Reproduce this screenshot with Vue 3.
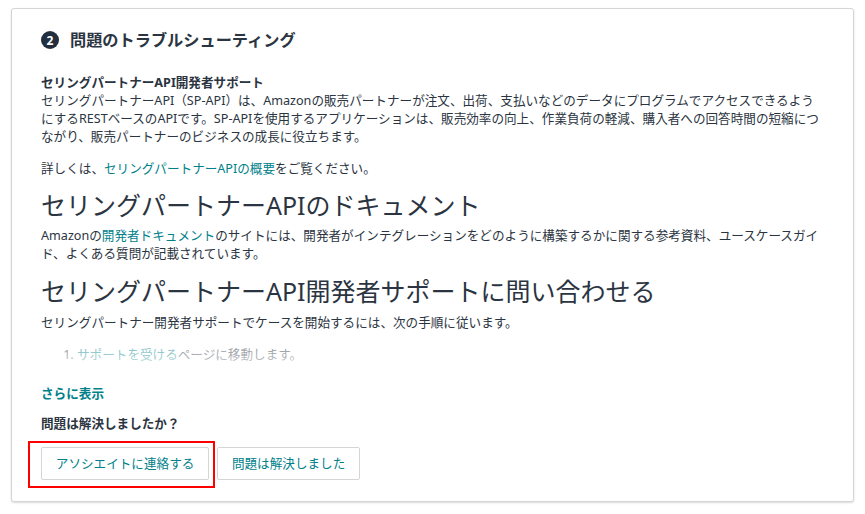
<script setup>
</script>

<template>
  <div class="page">
    <section class="card">
      <header class="head">
        <span class="step">2</span>
        <h2 class="title">問題のトラブルシューティング</h2>
      </header>
      <div class="body">
        <div class="content">
          <p class="para"><b>セリングパートナーAPI開発者サポート</b><br>セリングパートナーAPI（SP-API）は、Amazonの販売パートナーが注文、出荷、支払いなどのデータにプログラムでアクセスできるようにするRESTベースのAPIです。SP-APIを使用するアプリケーションは、販売効率の向上、作業負荷の軽減、購入者への回答時間の短縮につながり、販売パートナーのビジネスの成長に役立ちます。</p>
          <p class="para gap">詳しくは、<a class="link">セリングパートナーAPIの概要</a>をご覧ください。</p>
          <h1 class="big first">セリングパートナーAPIのドキュメント</h1>
          <p class="para">Amazonの<a class="link">開発者ドキュメント</a>のサイトには、開発者がインテグレーションをどのように構築するかに関する参考資料、ユースケースガイド、よくある質問が記載されています。</p>
          <h1 class="big second">セリングパートナーAPI開発者サポートに問い合わせる</h1>
          <p class="para">セリングパートナー開発者サポートでケースを開始するには、次の手順に従います。</p>
          <ol class="steps">
            <li><a class="link">サポートを受ける</a>ページに移動します。</li>
          </ol>
          <div class="fade"></div>
        </div>
        <a class="more">さらに表示</a>
        <p class="ask">問題は解決しましたか？</p>
        <div class="actions">
          <span class="marked"><button class="btn">アソシエイトに連絡する</button></span>
          <button class="btn">問題は解決しました</button>
        </div>
      </div>
    </section>
  </div>
</template>

<style>
html, body { margin: 0; background: #fff; }
</style>

<style scoped>
.page {
  width: 865px;
  height: 514px;
  box-sizing: border-box;
  padding: 8px 11px 0 11px;
  overflow: hidden;
  font-family: "Noto Sans", "Noto Sans CJK JP", sans-serif;
  color: #16191f;
}
.card {
  box-sizing: border-box;
  height: 494px;
  background: #fff;
  border: 1px solid #d5d5d5;
  border-radius: 3px;
  box-shadow: 0 1px 2px rgba(0, 0, 0, 0.15);
  padding: 19px 29px 0;
}
.head { display: flex; align-items: center; gap: 11px; height: 24px; }
.step {
  width: 18px; height: 18px; border-radius: 50%;
  background: #232f3e; color: #fff;
  font-size: 12px; font-weight: 700;
  display: flex; align-items: center; justify-content: center;
}
.title { margin: 0; font-size: 16.2px; font-weight: 700; color: #2b3441; line-height: 24px; }
.body { padding-top: 22px; }
.content { position: relative; height: 309px; overflow: hidden; }
.para { margin: 0; font-size: 12.6px; line-height: 18px; color: #2b3441; }
.gap { margin-top: 14px; }
.link { color: #00818a; }
.big { margin: 0; font-weight: 400; font-size: 25px; line-height: 32px; color: #2b3441; }
.first { margin-top: 11px; margin-bottom: 6px; }
.second { margin-top: 12px; margin-bottom: 7px; }
.steps { margin: 14px 0 0; padding-left: 36px; font-size: 12.6px; line-height: 18px; color: #2b3441; }
.fade {
  position: absolute; left: 0; right: 0; bottom: 0; height: 50px;
  background: linear-gradient(rgba(255,255,255,0.3), rgba(255,255,255,0.65) 50%, #fff 85%);
}
.more { display: block; margin-top: 2px; font-size: 12.6px; line-height: 18px; font-weight: 700; color: #00818a; }
.ask { margin: 12px 0 0; font-size: 12.6px; line-height: 18px; font-weight: 700; color: #2b3441; }
.actions { display: flex; gap: 8px; margin-top: 14px; }
.marked { position: relative; display: block; }
.marked::after {
  content: ""; position: absolute; left: -13px; top: -6px; right: -6px; bottom: -8px;
  border: 2px solid #f00; pointer-events: none;
}
.btn {
  height: 33px; padding: 0 13.8px;
  background: #fff; border: 1px solid #d5d5d5; border-radius: 2px;
  font: 400 12.6px/18px "Noto Sans", "Noto Sans CJK JP", sans-serif;
  color: #00818a;
  display: block;
}
</style>
